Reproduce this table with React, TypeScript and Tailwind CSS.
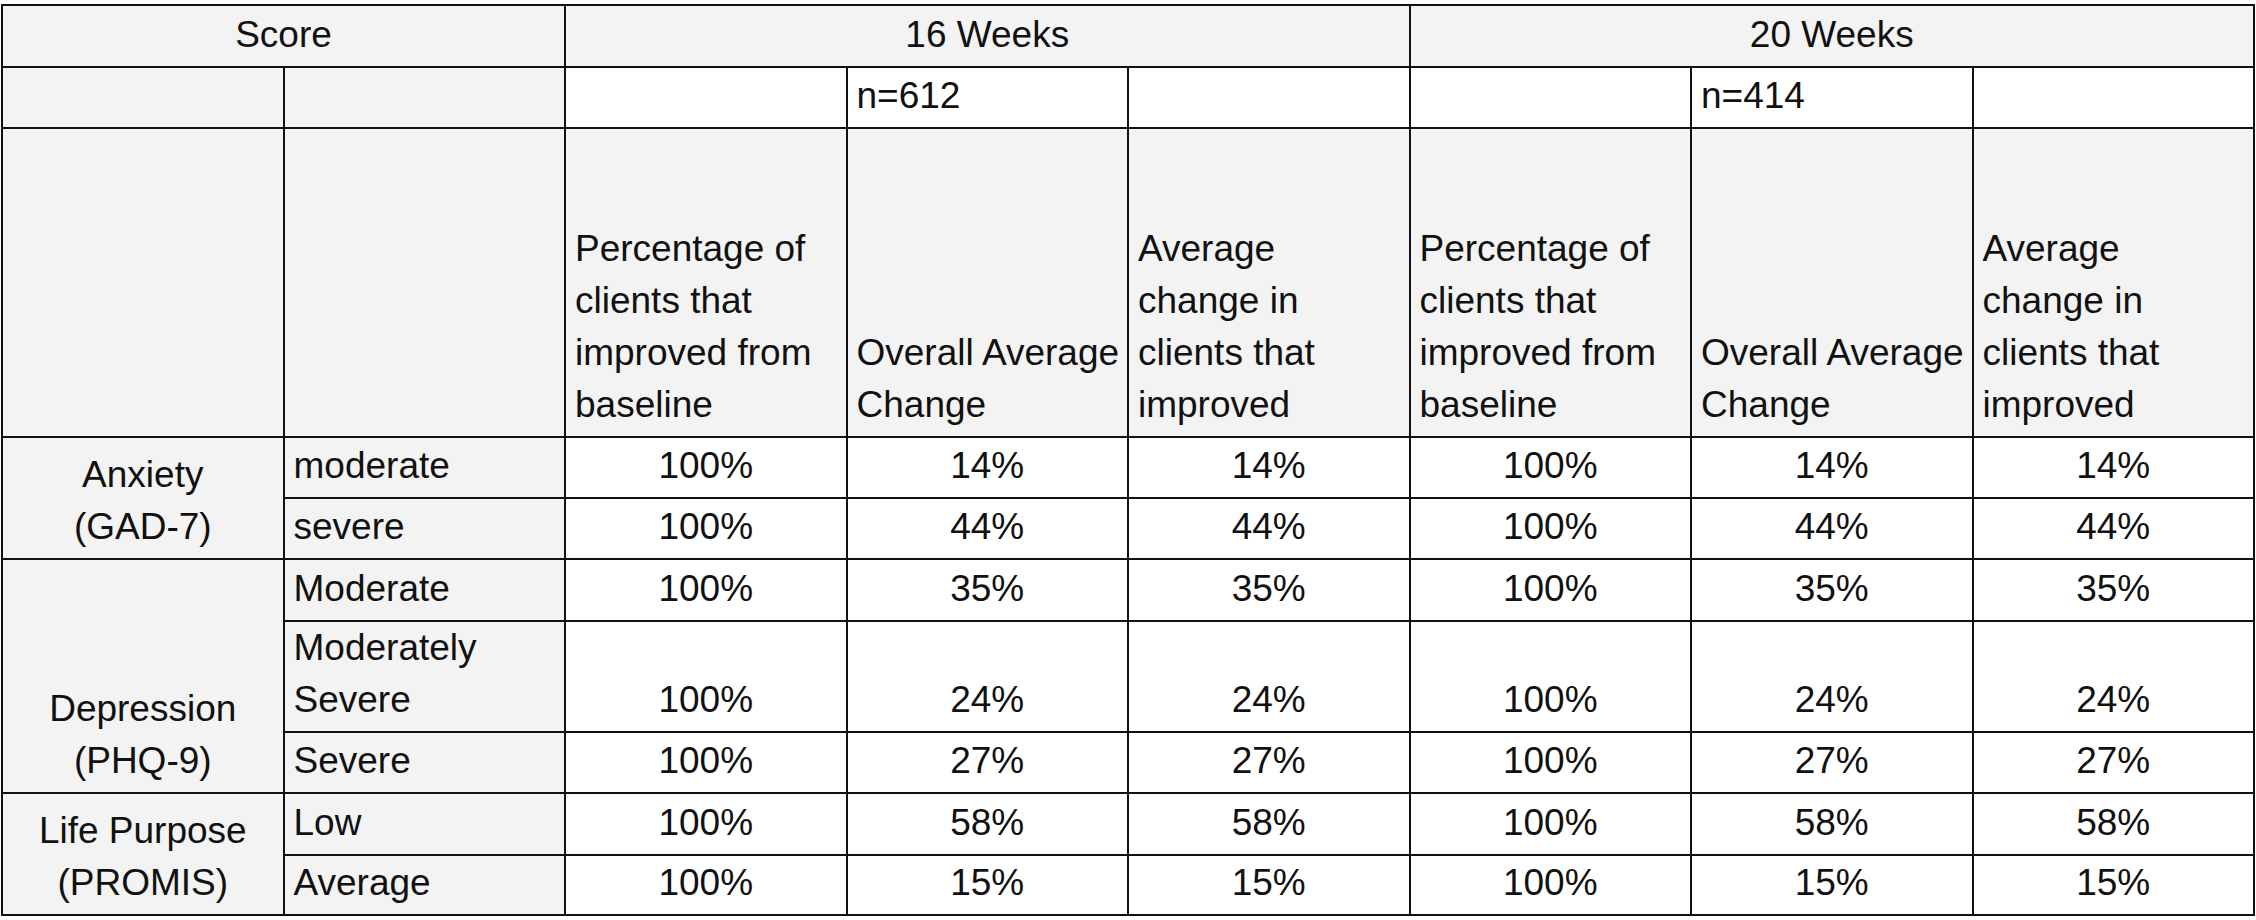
import React from 'react';

type Row = {
  level: React.ReactNode;
  h: string;
  vals: [string, string, string];
};

const groups: { label: React.ReactNode; rows: Row[] }[] = [
  {
    label: <>Anxiety<br />(GAD-7)</>,
    rows: [
      { level: 'moderate', h: 'h-[61px]', vals: ['100%', '14%', '14%'] },
      { level: 'severe', h: 'h-[61px]', vals: ['100%', '44%', '44%'] },
    ],
  },
  {
    label: <>Depression<br />(PHQ-9)</>,
    rows: [
      { level: 'Moderate', h: 'h-[62px]', vals: ['100%', '35%', '35%'] },
      { level: <>Moderately<br />Severe</>, h: 'h-[111px]', vals: ['100%', '24%', '24%'] },
      { level: 'Severe', h: 'h-[61px]', vals: ['100%', '27%', '27%'] },
    ],
  },
  {
    label: <>Life Purpose<br />(PROMIS)</>,
    rows: [
      { level: 'Low', h: 'h-[62px]', vals: ['100%', '58%', '58%'] },
      { level: 'Average', h: 'h-[60px]', vals: ['100%', '15%', '15%'] },
    ],
  },
];

// left-aligned cells sit ~9px off the line, centred ones keep even padding
const base = 'border-2 border-[#111] align-bottom pt-0 pb-[5px] whitespace-nowrap';
const left = `${base} pl-[9px] pr-[3px] text-left`;
const center = `${base} px-[4px] text-center`;
const gray = 'bg-[#f3f3f3]';

const HeaderTexts = () => (
  <>
    <th className={`${left} ${gray} font-normal`}>
      Percentage of<br />clients that<br />improved from<br />baseline
    </th>
    <th className={`${left} ${gray} font-normal`}>
      Overall Average<br />Change
    </th>
    <th className={`${left} ${gray} font-normal`}>
      Average<br />change in<br />clients that<br />improved
    </th>
  </>
);

export default function App() {
  return (
    <div className="w-[2256px] h-[920px] bg-white pt-[4px] px-[1px] text-[#111] font-['Liberation_Sans',Arial,sans-serif] text-[37px] leading-[52px]">
      <table className="w-[2254px] table-fixed border-collapse">
        <thead>
          <tr className="h-[62px]">
            <th colSpan={2} className={`${center} ${gray} font-normal`}>Score</th>
            <th colSpan={3} className={`${center} ${gray} font-normal`}>16 Weeks</th>
            <th colSpan={3} className={`${center} ${gray} font-normal`}>20 Weeks</th>
          </tr>
          <tr className="h-[61px]">
            <th className={`${left} ${gray}`}></th>
            <th className={`${left} ${gray}`}></th>
            <th className={`${left} bg-white`}></th>
            <th className={`${left} bg-white font-normal`}>n=612</th>
            <th className={`${left} bg-white`}></th>
            <th className={`${left} bg-white`}></th>
            <th className={`${left} bg-white font-normal`}>n=414</th>
            <th className={`${left} bg-white`}></th>
          </tr>
          <tr className="h-[309px]">
            <th className={`${left} ${gray}`}></th>
            <th className={`${left} ${gray}`}></th>
            <HeaderTexts />
            <HeaderTexts />
          </tr>
        </thead>
        <tbody>
          {groups.map((g, gi) =>
            g.rows.map((r, ri) => (
              <tr key={`${gi}-${ri}`} className={r.h}>
                {ri === 0 && (
                  <td rowSpan={g.rows.length} className={`${center} ${gray}`}>
                    {g.label}
                  </td>
                )}
                <td className={`${left} ${gray}`}>{r.level}</td>
                {[...r.vals, ...r.vals].map((v, vi) => (
                  <td key={vi} className={`${center} bg-white`}>{v}</td>
                ))}
              </tr>
            ))
          )}
        </tbody>
      </table>
    </div>
  );
}
